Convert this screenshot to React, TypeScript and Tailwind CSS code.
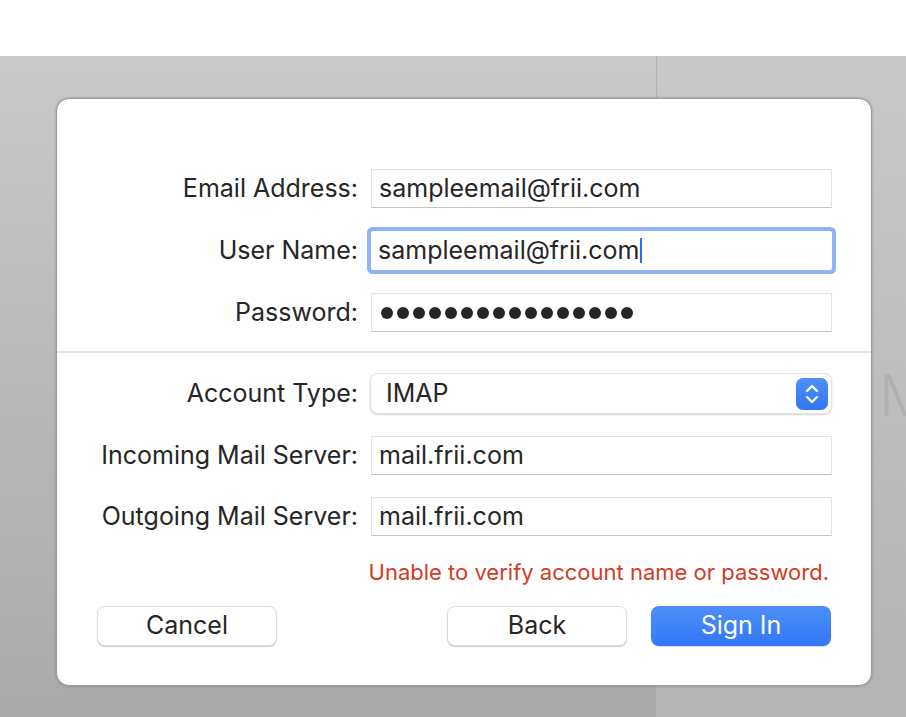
import React from "react";

const fieldBox =
    "h-[39px] bg-white border border-[#e4e4e4] border-b-[#c4c4c4] flex items-center pl-[7px] text-[25px] text-[#262626]";

const Label = ({ children }: { children: React.ReactNode }) => (
    <div className="text-right text-[25px] text-[#262626] leading-none">{children}</div>
);

const Chevrons = () => (
    <svg width="16" height="22" viewBox="0 0 16 22" fill="none">
        <path d="M3 8 L8 3 L13 8" stroke="white" strokeWidth="2.4" strokeLinecap="round" strokeLinejoin="round" />
        <path d="M3 14 L8 19 L13 14" stroke="white" strokeWidth="2.4" strokeLinecap="round" strokeLinejoin="round" />
    </svg>
);

const App = () => {
    const dots = Array.from({ length: 16 });

    return (
        <div className="relative w-[906px] h-[717px] overflow-hidden bg-white font-['Inter','Noto_Sans',sans-serif]">
            {/* window chrome */}
            <div className="h-[56px] bg-white" />
            <div className="flex h-[661px]">
                <div className="w-[657px] shrink-0 bg-gradient-to-b from-[#c9c9c9] to-[#a9a9a9] border-r border-[#b2b2b2]" />
                <div className="flex-1 min-w-0 overflow-hidden bg-gradient-to-b from-[#c8c8c8] to-[#b4b4b4] pt-[310px] pl-[222px] text-[58px] leading-none text-[#b0b0b0] font-light whitespace-nowrap">
                    M
                </div>
            </div>

            {/* account sheet */}
            <div className="absolute left-[56px] top-[98px] w-[816px] h-[588px] bg-white rounded-[13px] border border-[#9a9a9a] shadow-[0_0_3px_rgba(0,0,0,0.25)] pt-[70px]">
                <div className="grid grid-cols-[301px_461px] gap-x-[13px] gap-y-[23px] items-center">
                    <Label>Email Address:</Label>
                    <div className={fieldBox}>sampleemail@frii.com</div>

                    <Label>User Name:</Label>
                    <div className="h-[39px] bg-white rounded-[2px] shadow-[0_0_0_4px_#93b2f5] flex items-center pl-[7px] text-[25px] text-[#262626]">
                        sampleemail@frii.com
                        <span className="inline-block w-[2px] h-[25px] bg-[#2f6cf5] ml-[1px]" />
                    </div>

                    <Label>Password:</Label>
                    <div className={fieldBox}>
                        <div className="flex gap-[4px] pl-[2px]">
                            {dots.map((_, i) => (
                                <span key={i} className="w-[12px] h-[12px] rounded-full bg-[#262626]" />
                            ))}
                        </div>
                    </div>
                </div>

                <div className="h-[2px] bg-[#e5e5e5] mt-[19px] mb-[20px]" />

                <div className="grid grid-cols-[301px_461px] gap-x-[13px] gap-y-[22px] items-center">
                    <Label>Account Type:</Label>
                    <div className="h-[41px] -ml-[1px] rounded-[8px] bg-white border border-[#e2e2e2] shadow-[0_1px_2px_rgba(0,0,0,0.18)] flex items-center justify-between pl-[15px] pr-[3px] text-[25px] text-[#262626]">
                        <span>IMAP</span>
                        <div className="w-[32px] h-[32px] rounded-[7px] bg-gradient-to-b from-[#4d90f9] to-[#3176f5] flex items-center justify-center">
                            <Chevrons />
                        </div>
                    </div>

                    <Label>Incoming Mail Server:</Label>
                    <div className={fieldBox}>mail.frii.com</div>

                    <Label>Outgoing Mail Server:</Label>
                    <div className={fieldBox}>mail.frii.com</div>
                </div>

                <div className="flex justify-end pr-[42px] mt-[25px] text-[22px] text-[#d23c27] leading-none">
                    Unable to verify account name or password.
                </div>

                <div className="flex items-center px-[40px] mt-[23px]">
                    <button className="w-[180px] h-[40px] rounded-[8px] bg-white border border-[#dedede] shadow-[0_1px_1px_rgba(0,0,0,0.2)] text-[25px] text-[#262626]">
                        Cancel
                    </button>
                    <div className="flex-1" />
                    <button className="w-[180px] h-[40px] rounded-[8px] bg-white border border-[#dedede] shadow-[0_1px_1px_rgba(0,0,0,0.2)] text-[25px] text-[#262626]">
                        Back
                    </button>
                    <button className="ml-[24px] w-[180px] h-[40px] rounded-[8px] bg-gradient-to-b from-[#4c8ff9] to-[#3477f6] shadow-[0_1px_1px_rgba(0,0,0,0.15)] text-[25px] text-white">
                        Sign In
                    </button>
                </div>
            </div>
        </div>
    );
};

export default App;
